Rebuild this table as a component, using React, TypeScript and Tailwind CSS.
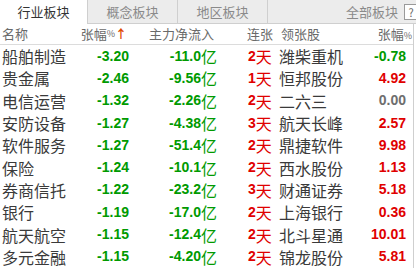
const rows = [
    ["船舶制造", "-3.20", "-11.0", "2", "潍柴重机", "-0.78"],
    ["贵金属", "-2.46", "-9.56", "1", "恒邦股份", "4.92"],
    ["电信运营", "-1.32", "-2.26", "2", "二六三", "0.00"],
    ["安防设备", "-1.27", "-4.38", "3", "航天长峰", "2.57"],
    ["软件服务", "-1.27", "-51.4", "2", "鼎捷软件", "9.98"],
    ["保险", "-1.24", "-10.1", "2", "西水股份", "1.13"],
    ["券商信托", "-1.22", "-23.2", "3", "财通证券", "5.18"],
    ["银行", "-1.19", "-17.0", "2", "上海银行", "0.36"],
    ["航天航空", "-1.15", "-12.4", "2", "北斗星通", "10.01"],
    ["多元金融", "-1.15", "-4.20", "2", "锦龙股份", "5.81"],
];

const cjk = "font-['Noto_Sans_CJK_SC',sans-serif]";
const num = "font-['Liberation_Sans',sans-serif] font-bold";

const pctColor = (v: string) =>
    v.startsWith("-") ? "text-[#009a00]" : v === "0.00" ? "text-[#6e6e6e]" : "text-[#e00000]";

const App = () => {
    return (
        <div className={`w-[416px] h-[269px] overflow-hidden bg-white whitespace-nowrap ${cjk}`}>
            <div className="flex h-[24px] bg-[#ececec] border-b border-[#cfcfcf] text-[13px] leading-[23px]">
                <div className="w-[88px] bg-white text-center text-[#333] border-r border-[#cfcfcf] h-[24px]">行业板块</div>
                <div className="w-[90px] text-center text-[#8a8a8a] border-r border-[#cfcfcf]">概念板块</div>
                <div className="w-[90px] text-center text-[#8a8a8a] border-r border-[#cfcfcf]">地区板块</div>
                <div className="flex-1 flex items-center justify-end text-[#8a8a8a]">
                    <span>全部板块</span>
                    <span className="ml-[6px] w-[14px] h-[16px] border border-[#9a9a9a] bg-white text-[11px] leading-[14px] text-center text-[#666] mr-[-2px]">?</span>
                </div>
            </div>
            <div className="border-r border-[#cfcfcf] mr-[2px]">
                <div className="flex h-[21px] items-center border-b border-[#dcdcdc] text-[13px] text-[#6a6a6a]">
                    <div className="w-[80px] pl-[2px]">名称</div>
                    <div className="w-[50px] flex items-center justify-end pr-[3px]">
                        <span>张幅</span>
                        <span className="text-[9px]">%</span>
                        <span className="text-[#e04a00] text-[12px] font-bold">↑</span>
                    </div>
                    <div className="w-[88px] text-right pr-[4px]">主力净流入</div>
                    <div className="w-[60px] pl-[29px]">连张</div>
                    <div className="w-[72px] pl-[3px]">领张股</div>
                    <div className="flex-1 text-right pr-[1px]">
                        张幅<span className="text-[9px]">%</span>
                    </div>
                </div>
                {rows.map((r) => (
                    <div key={r[0]} className="flex h-[22.3px] items-center">
                        <div className="w-[80px] pl-[2px] text-[16px] text-[#3a3a3a]">{r[0]}</div>
                        <div className={`w-[50px] text-right pr-[1px] text-[14px] ${num} text-[#009a00]`}>{r[1]}</div>
                        <div className="w-[88px] pr-[1px] text-[#009a00] flex justify-end items-center">
                            <span className={`text-[14px] ${num}`}>{r[2]}</span>
                            <span className="text-[16px]">亿</span>
                        </div>
                        <div className="w-[60px] pl-[30px] text-[#e00000] flex items-center">
                            <span className={`text-[14px] ${num}`}>{r[3]}</span>
                            <span className="text-[16px]">天</span>
                        </div>
                        <div className="w-[72px] pl-[1px] text-[16px] text-[#3a3a3a]">{r[4]}</div>
                        <div className={`flex-1 text-right pr-[7px] text-[14px] ${num} ${pctColor(r[5])}`}>{r[5]}</div>
                    </div>
                ))}
            </div>
        </div>
    );
};

export default App;
